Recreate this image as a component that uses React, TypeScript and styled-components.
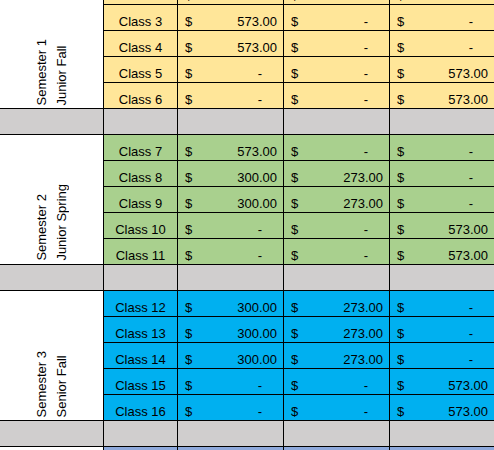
import React from 'react'
import styled, { createGlobalStyle } from 'styled-components'

type Amount = number | null

type ClassRow = {
  name: string
  fees: [Amount, Amount, Amount]
}

type Semester = {
  title: string
  term: string
  color: string
  classes: ClassRow[]
}

const GlobalStyle = createGlobalStyle`
  html, body {
    margin: 0;
    padding: 0;
    background: #ffffff;
  }
  body {
    font-family: 'Liberation Sans', Arial, sans-serif;
    overflow: hidden;
  }
`

const semesters: Semester[] = [
  {
    title: 'Semester 1',
    term: 'Junior Fall',
    color: '#ffe699',
    classes: [
      { name: 'Class 1', fees: [573, null, null] },
      { name: 'Class 2', fees: [573, null, null] },
      { name: 'Class 3', fees: [573, null, null] },
      { name: 'Class 4', fees: [573, null, null] },
      { name: 'Class 5', fees: [null, null, 573] },
      { name: 'Class 6', fees: [null, null, 573] }
    ]
  },
  {
    title: 'Semester 2',
    term: 'Junior Spring',
    color: '#a9d08e',
    classes: [
      { name: 'Class 7', fees: [573, null, null] },
      { name: 'Class 8', fees: [300, 273, null] },
      { name: 'Class 9', fees: [300, 273, null] },
      { name: 'Class 10', fees: [null, null, 573] },
      { name: 'Class 11', fees: [null, null, 573] }
    ]
  },
  {
    title: 'Semester 3',
    term: 'Senior Fall',
    color: '#00b0f0',
    classes: [
      { name: 'Class 12', fees: [300, 273, null] },
      { name: 'Class 13', fees: [300, 273, null] },
      { name: 'Class 14', fees: [300, 273, null] },
      { name: 'Class 15', fees: [null, null, 573] },
      { name: 'Class 16', fees: [null, null, 573] }
    ]
  },
  {
    title: 'Semester 4',
    term: 'Senior Spring',
    color: '#8ea9db',
    classes: [
      { name: 'Class 17', fees: [573, null, null] },
      { name: 'Class 18', fees: [300, 273, null] },
      { name: 'Class 19', fees: [300, 273, null] },
      { name: 'Class 20', fees: [null, null, 573] },
      { name: 'Class 21', fees: [null, null, 573] }
    ]
  }
]

const App: React.FC = () => {
  return (
    <>
      <GlobalStyle />
      <Viewport>
        <Sheet>
          {semesters.map((sem, i) => (
            <React.Fragment key={sem.title}>
              <LabelCell $span={sem.classes.length}>
                <VerticalText>
                  {sem.title}
                  <br />
                  {sem.term}
                </VerticalText>
              </LabelCell>
              {sem.classes.map((row) => (
                <React.Fragment key={row.name}>
                  <ClassCell $bg={sem.color}>{row.name}</ClassCell>
                  {row.fees.map((fee, j) => (
                    <MoneyCell key={j} $bg={sem.color}>
                      <span>$</span>
                      <Value $dash={fee === null}>
                        {fee === null ? '-' : fee.toFixed(2)}
                      </Value>
                    </MoneyCell>
                  ))}
                </React.Fragment>
              ))}
              {i < semesters.length - 1 && (
                <>
                  <SpacerCell />
                  <SpacerCell />
                  <SpacerCell />
                  <SpacerCell />
                  <SpacerCell />
                </>
              )}
            </React.Fragment>
          ))}
        </Sheet>
      </Viewport>
    </>
  )
}

export default App

const Viewport = styled.div`
  width: 494px;
  height: 450px;
  overflow: hidden;
  background: #ffffff;
`

const Sheet = styled.div`
  display: grid;
  grid-template-columns: 103px 73px 105px 105px 104px;
  grid-auto-rows: 25px;
  gap: 1px;
  margin-top: -47px;
  background: #000000;
  color: #000000;
  font-size: 13px;
  line-height: 15px;
`

const LabelCell = styled.div<{ $span: number }>`
  grid-row: span ${({ $span }) => $span};
  background: #ffffff;
  display: flex;
  justify-content: center;
  align-items: flex-end;
  padding-bottom: 3px;
  overflow: hidden;
`

const VerticalText = styled.span`
  writing-mode: vertical-rl;
  transform: rotate(180deg);
  line-height: 20px;
  white-space: nowrap;
`

const ClassCell = styled.div<{ $bg: string }>`
  background: ${({ $bg }) => $bg};
  display: flex;
  justify-content: center;
  align-items: flex-end;
  padding-bottom: 1px;
  white-space: nowrap;
`

const MoneyCell = styled.div<{ $bg: string }>`
  background: ${({ $bg }) => $bg};
  display: flex;
  justify-content: space-between;
  align-items: flex-end;
  padding: 0 6px 1px 7px;
  white-space: nowrap;
`

const Value = styled.span<{ $dash: boolean }>`
  padding-right: ${({ $dash }) => ($dash ? '15px' : '0')};
`

const SpacerCell = styled.div`
  background: #d0cece;
`
